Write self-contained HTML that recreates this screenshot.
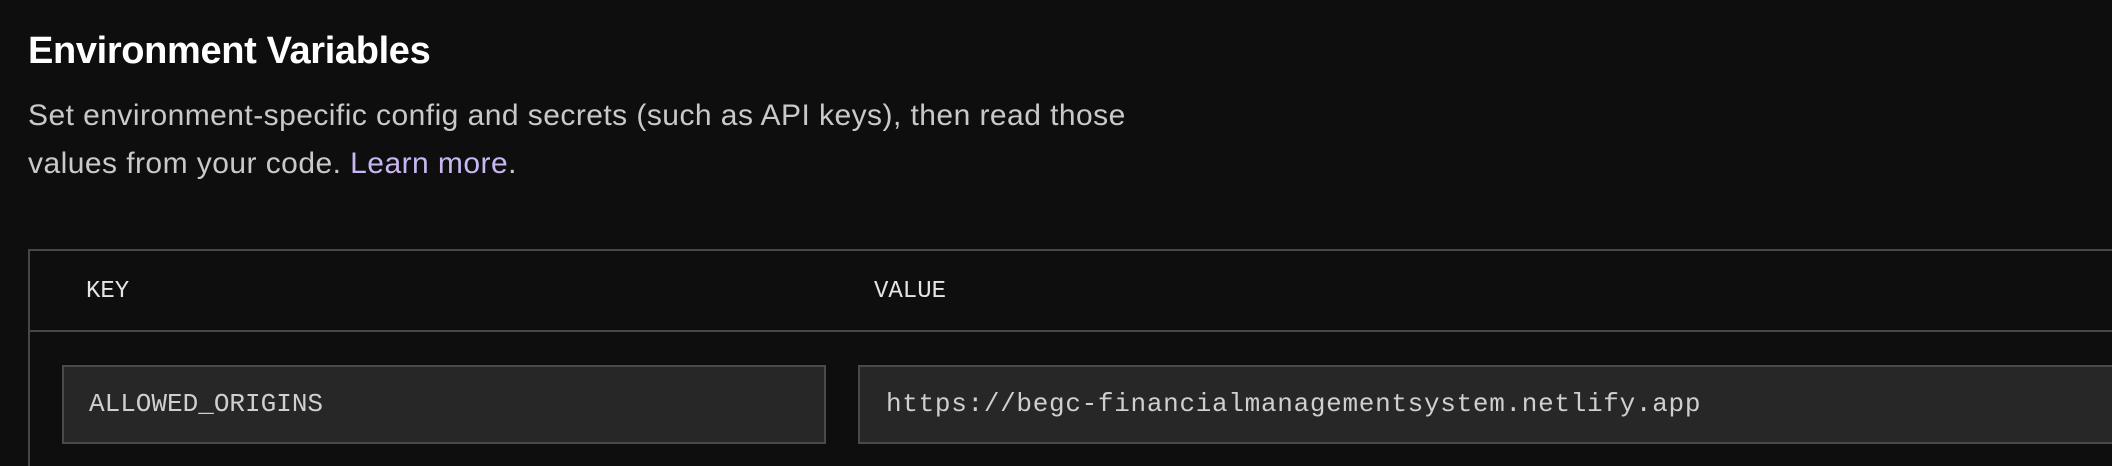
<!DOCTYPE html>
<html><head><style>
html,body{margin:0;padding:0;background:#0e0e0e;width:2112px;height:466px;overflow:hidden}
body{position:relative;font-family:"Liberation Sans",sans-serif}
h1{position:absolute;left:28px;top:30px;margin:0;font-size:38px;font-weight:bold;color:#fff;letter-spacing:-0.35px}
p{position:absolute;left:28px;top:92px;margin:0;font-size:30px;line-height:48px;color:#c9c9c9;width:1300px;letter-spacing:0.45px}
p a{color:#c9b6f2;text-decoration:none}
.table{position:absolute;left:28px;top:249px;width:2084px;height:217px;border:2px solid #474747;border-right:none;border-bottom:none;box-sizing:border-box}
.hline{position:absolute;left:28px;top:330px;width:2084px;height:2px;background:#474747}
.hdr{position:absolute;top:278px;font-family:"Liberation Mono",monospace;font-size:24px;color:#e4e4e4}
.inp{position:absolute;top:365px;height:79px;background:#272727;border:2px solid #4a4a4a;box-sizing:border-box;font-family:"Liberation Mono",monospace;font-size:26px;color:#cfcfcf;line-height:75px;white-space:nowrap;overflow:hidden}
</style></head><body>
<h1>Environment Variables</h1>
<p>Set environment-specific config and secrets (such as API keys), then read those<br>values from your code. <a>Learn more</a>.</p>
<div class="table"></div>
<div class="hline"></div>
<div class="hdr" style="left:86px">KEY</div>
<div class="hdr" style="left:874px">VALUE</div>
<div class="inp" style="left:62px;width:764px;padding-left:25px">ALLOWED_ORIGINS</div>
<div class="inp" style="left:858px;width:1254px;padding-left:26px;border-right:none;letter-spacing:0.7px">https://begc-financialmanagementsystem.netlify.app</div>
</body></html>
